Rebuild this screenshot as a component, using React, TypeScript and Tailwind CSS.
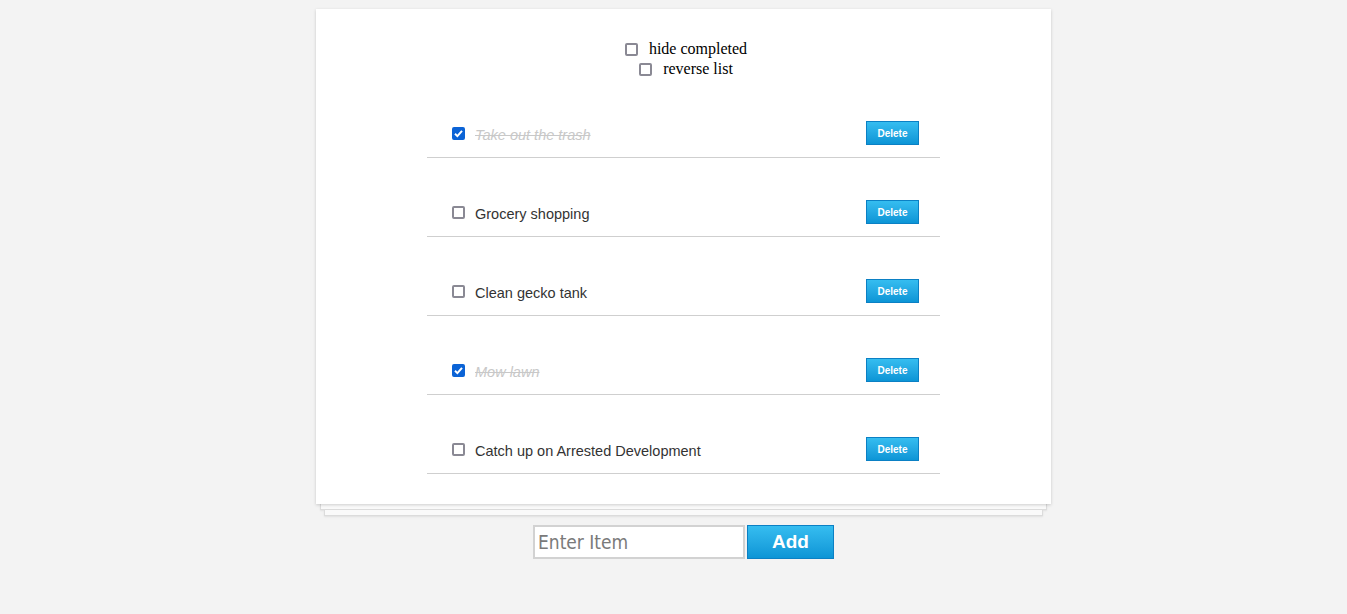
import { useState, FormEvent } from "react";

interface Task {
  id: number;
  text: string;
  done: boolean;
}

const initialTasks: Task[] = [
  { id: 1, text: "Take out the trash", done: true },
  { id: 2, text: "Grocery shopping", done: false },
  { id: 3, text: "Clean gecko tank", done: false },
  { id: 4, text: "Mow lawn", done: true },
  { id: 5, text: "Catch up on Arrested Development", done: false },
];

const Check = ({ checked, onChange }: { checked: boolean; onChange: () => void }) => (
  <span className="relative inline-flex h-[13px] w-[13px] shrink-0">
    <input
      type="checkbox"
      checked={checked}
      onChange={onChange}
      className="h-[13px] w-[13px] appearance-none rounded-[2px] border-2 border-[#8a8994] bg-white checked:border-[#0b63d6] checked:bg-[#0b63d6]"
    />
    {checked && (
      <svg
        viewBox="0 0 13 13"
        className="pointer-events-none absolute inset-0 h-[13px] w-[13px]"
      >
        <path d="M3 6.8 L5.4 9.1 L10 3.9" fill="none" stroke="white" strokeWidth="2" />
      </svg>
    )}
  </span>
);

const App = () => {
  const [tasks, setTasks] = useState<Task[]>(initialTasks);
  const [hideCompleted, setHideCompleted] = useState(false);
  const [reverse, setReverse] = useState(false);
  const [item, setItem] = useState("");

  const toggle = (id: number) =>
    setTasks((prev) => prev.map((t) => (t.id === id ? { ...t, done: !t.done } : t)));

  const remove = (id: number) => setTasks((prev) => prev.filter((t) => t.id !== id));

  const handleSubmit = (event: FormEvent<HTMLFormElement>) => {
    event.preventDefault();
    if (!item.trim()) return;
    setTasks((prev) => [...prev, { id: Date.now(), text: item, done: false }]);
    setItem("");
  };

  let shown = hideCompleted ? tasks.filter((t) => !t.done) : tasks;
  if (reverse) shown = [...shown].reverse();

  return (
    <div className="min-h-screen bg-[#f3f3f3] pt-[9px] pl-[20px]">
      <div className="mx-auto w-[735px]">
        <div className="relative z-10 bg-white px-[111px] pt-[30px] pb-[30px] shadow-[0_1px_3px_rgba(0,0,0,0.18)]">
          <div className="flex flex-col items-center pl-[5px] font-['Liberation_Serif',serif] text-[16px] leading-[20px] text-black">
            <label className="flex items-center gap-[11px]">
              <Check checked={hideCompleted} onChange={() => setHideCompleted(!hideCompleted)} />
              hide completed
            </label>
            <label className="flex items-center gap-[11px]">
              <Check checked={reverse} onChange={() => setReverse(!reverse)} />
              reverse list
            </label>
          </div>
          <ul>
            {shown.map((t) => (
              <li
                key={t.id}
                className="flex h-[79px] items-center border-b border-[#cfcfcf] pt-[42px] pb-[12px] pl-[25px] pr-[21px]"
              >
                <Check checked={t.done} onChange={() => toggle(t.id)} />
                <span
                  className={`ml-[10px] flex-1 pt-[4px] font-['Liberation_Sans',Arial,sans-serif] text-[14.5px] leading-[18px] ${
                    t.done ? "italic text-[#c8c8c8] line-through" : "text-[#333]"
                  }`}
                >
                  {t.text}
                </span>
                <button
                  onClick={() => remove(t.id)}
                  className="h-[24px] w-[53px] border border-[#0b80c4] bg-gradient-to-b from-[#35bdf0] to-[#0b95d6] font-['Liberation_Sans',Arial,sans-serif] text-[10px] font-bold text-white"
                >
                  Delete
                </button>
              </li>
            ))}
          </ul>
        </div>
        <div className="mx-[4px] h-[6px] border border-t-0 border-[#dcdcdc] bg-[#fafafa] shadow-[0_1px_2px_rgba(0,0,0,0.08)]">
        </div>
        <div className="mx-[8px] h-[6px] border border-t-0 border-[#dcdcdc] bg-[#fafafa] shadow-[0_1px_2px_rgba(0,0,0,0.08)]">
        </div>
        <form onSubmit={handleSubmit} className="mt-[9px] flex justify-center gap-[2px]">
          <input
            type="text"
            value={item}
            onChange={(e) => setItem(e.target.value)}
            placeholder="Enter Item"
            className="h-[34px] w-[212px] border-2 border-[#d2d2d2] bg-white px-[3px] font-['DejaVu_Sans_Condensed','DejaVu_Sans',sans-serif] text-[19px] text-[#555] outline-none placeholder:text-[#7a7a7a]"
          />
          <button
            type="submit"
            className="h-[34px] w-[87px] border border-[#0b80c4] bg-gradient-to-b from-[#35bdf0] to-[#0b95d6] font-['Liberation_Sans',Arial,sans-serif] text-[19px] font-bold text-white"
          >
            Add
          </button>
        </form>
      </div>
    </div>
  );
};

export default App;
